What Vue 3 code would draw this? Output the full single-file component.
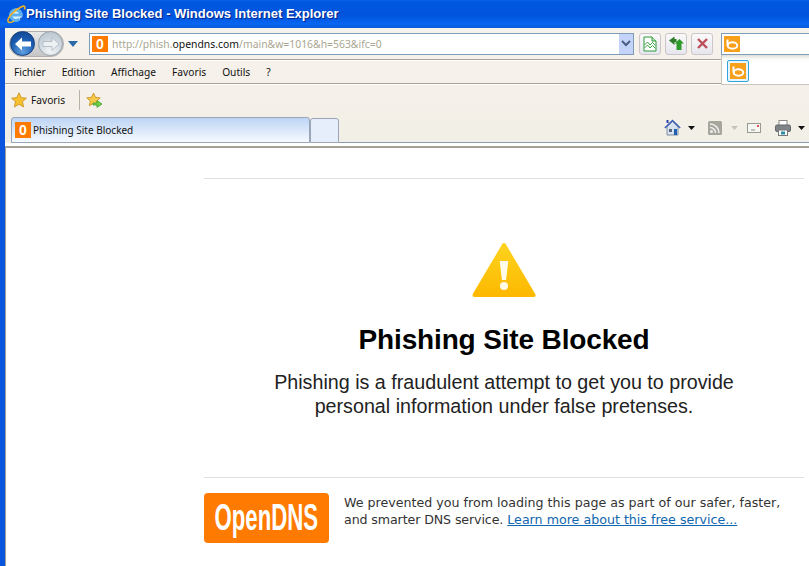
<template>
  <div class="window">
    <div class="titlebar">
      <svg class="ie-logo" width="20" height="20" viewBox="0 0 20 20">
        <circle cx="10" cy="11" r="6.500" fill="#dff1fc" />
        <path d="M5.500 11h9.500a5.200 5.200 0 1 0-1.600 4" fill="none" stroke="#5ab0ec" stroke-width="3" />
        <path d="M14 15l2.500-.8" stroke="#1d64c8" stroke-width="2" />
        <path d="M2 17.500C1 14 8 6 16 2.500c2.500-1 3.500 0 2.500 3" fill="none" stroke="#f5b21f" stroke-width="1.600" />
        <path d="M2 17.500c1 1.500 3.500 1 6-.3" fill="none" stroke="#f5b21f" stroke-width="1.400" />
      </svg>
      <span>Phishing Site Blocked - Windows Internet Explorer</span>
    </div>

    <div class="body">
      <div class="chrome">
        <div class="navrow">
          <div class="navpill">
            <div class="round back">
              <svg width="18" height="16" viewBox="0 0 18 16"><path d="M1 8l7-6.500v4h9v5H8v4z" fill="#fff" /></svg>
            </div>
            <div class="round fwd">
              <svg width="18" height="16" viewBox="0 0 18 16"><path d="M17 8l-7-6.500v4H1v5h9v4z" fill="#eef1f4" stroke="#a5adb5" stroke-width=".7" /></svg>
            </div>
          </div>
          <svg class="navcaret" width="10" height="6" viewBox="0 0 10 6"><path d="M0 0h10L5 6z" fill="#2b6aa8" /></svg>

          <div class="address">
            <div class="favicon">0</div>
            <div class="url"><span class="dim">http://phish.</span>opendns.com<span class="dim">/main&amp;w=1016&amp;h=563&amp;ifc=0</span></div>
            <div class="dropbtn">
              <svg width="10" height="7" viewBox="0 0 10 7"><path d="M1 1l4 4 4-4" fill="none" stroke="#4a5f86" stroke-width="2" /></svg>
            </div>
          </div>

          <div class="toolbtn first">
            <svg width="14" height="16" viewBox="0 0 14 16">
              <path d="M1 1h8l4 4v10H1z" fill="#fff" stroke="#2f9a3c" />
              <path d="M9 1v4h4" fill="#bfe6b5" stroke="#2f9a3c" />
              <path d="M1.500 9l3-3 2.500 3 2.500-2.500 3 3M1.500 12l3-3 2.500 3 2.500-2.500 3 3" fill="none" stroke="#3fa64a" />
            </svg>
          </div>
          <div class="toolbtn">
            <svg width="16" height="15" viewBox="0 0 16 15">
              <path d="M1 4.500L6.500.5V3h2v3h-2v3z" fill="#2f7d2a" />
              <path d="M8.500 14V7.500H6.500L11.500 3l4.500 4.500h-2.500V14z" fill="#2f9a2c" />
            </svg>
          </div>
          <div class="toolbtn">
            <svg width="13" height="13" viewBox="0 0 13 13"><path d="M2 2l9 9M11 2l-9 9" stroke="#bc4f57" stroke-width="2.400" /></svg>
          </div>

          <div class="search">
            <svg width="16" height="16" viewBox="0 0 16 16">
              <rect width="16" height="16" fill="#f9a01b" />
              <ellipse cx="8.500" cy="9.500" rx="4.800" ry="3.200" fill="none" stroke="#fff" stroke-width="2" />
              <path d="M3.500 3.500v6" stroke="#fff" stroke-width="2" />
            </svg>
          </div>
        </div>

        <div class="menubar">
          <span>Fichier</span>
          <span>Edition</span>
          <span>Affichage</span>
          <span>Favoris</span>
          <span>Outils</span>
          <span>?</span>
        </div>

        <div class="favbar">
          <svg class="star" width="16" height="16" viewBox="0 0 16 16"><path d="M8 .8l2.200 4.800 5.200.6-3.900 3.500 1.100 5.200L8 12.300l-4.600 2.600 1.100-5.200L.6 6.200l5.200-.6z" fill="#f6c02f" stroke="#c58b1c" stroke-width=".8" /></svg>
          <span class="favlabel">Favoris</span>
          <div class="favsep"></div>
          <svg class="addfav" width="17" height="17" viewBox="0 0 17 17">
            <path d="M7.500 1l2 4.300 4.700.6-3.500 3.200 1 4.700-4.200-2.400-4.200 2.400 1-4.700L.8 5.900l4.700-.6z" fill="#f6c94a" stroke="#c58b1c" stroke-width=".8" />
            <path d="M7 11h4V8.500l5 3.500-5 3.500V13H7z" fill="#6fd04a" stroke="#3b9a2a" stroke-width=".7" />
          </svg>
        </div>

        <div class="tabrow">
          <div class="tab">
            <div class="favicon small">0</div>
            <span>Phishing Site Blocked</span>
          </div>
          <div class="newtab"></div>
          <div class="tools">
            <svg class="home" width="17" height="17" viewBox="0 0 17 17">
              <path d="M3 8v8h11V8L8.500 2.500z" fill="#d8e2ee" stroke="#6a7a90" stroke-width=".8" />
              <path d="M.8 9l7.700-7.500L16.200 9" fill="none" stroke="#3a5fb5" stroke-width="1.400" />
              <rect x="2.500" y="1" width="2" height="3" fill="#2a3fa5" />
              <rect x="10" y="10" width="3" height="6" fill="#1d5fb0" />
              <rect x="5" y="10" width="3" height="3" fill="#57697f" />
            </svg>
            <svg class="caret" width="7" height="4" viewBox="0 0 7 4"><path d="M0 0h7L3.500 4z" fill="#111" /></svg>
            <svg class="rss" width="14" height="14" viewBox="0 0 14 14">
              <rect width="14" height="14" rx="1.500" fill="#a6a69c" />
              <circle cx="3.500" cy="10.500" r="1.500" fill="#eee" />
              <path d="M2 6.500a5.500 5.500 0 0 1 5.500 5.500M2 3a9 9 0 0 1 9 9" fill="none" stroke="#eee" stroke-width="1.500" />
            </svg>
            <svg class="caret faint" width="7" height="4" viewBox="0 0 7 4"><path d="M0 0h7L3.500 4z" fill="#c5c5ba" /></svg>
            <svg class="mail" width="14" height="10" viewBox="0 0 14 10">
              <rect x=".5" y=".5" width="13" height="9" fill="#f6f6f2" stroke="#9a9a94" />
              <rect x="10" y="2" width="2" height="2" fill="#e0524d" />
              <path d="M4 7h4" stroke="#888" />
            </svg>
            <svg class="printer" width="16" height="16" viewBox="0 0 16 16">
              <rect x="4" y=".5" width="8" height="5" fill="#fff" stroke="#8a8a8a" />
              <rect x=".5" y="5" width="15" height="6.500" rx="1.500" fill="#7f8488" stroke="#62666a" />
              <rect x="3.500" y="10" width="9" height="5.500" fill="#fff" stroke="#77787a" />
              <rect x="6" y="11.500" width="4" height="3" fill="#2c8fa5" />
            </svg>
            <svg class="caret" width="7" height="4" viewBox="0 0 7 4"><path d="M0 0h7L3.500 4z" fill="#111" /></svg>
          </div>
        </div>
      </div>

      <div class="page">
        <div class="panel">
          <div class="warn-wrap">
            <svg width="66" height="60" viewBox="0 0 66 60">
              <defs>
                <linearGradient id="warn" x1="0" y1="0" x2="0" y2="1">
                  <stop offset="0" stop-color="#ffd21e" />
                  <stop offset="1" stop-color="#fcb900" />
                </linearGradient>
              </defs>
              <path d="M33 6L62.500 56H3.500z" fill="url(#warn)" stroke="url(#warn)" stroke-width="4" stroke-linejoin="round" />
              <path d="M28.700 22h8.600l-2.200 19h-4.200z" fill="#fffbe8" />
              <circle cx="33" cy="47" r="4" fill="#fffbe8" />
            </svg>
          </div>
          <h1>Phishing Site Blocked</h1>
          <p class="lead">Phishing is a fraudulent attempt to get you to provide<br />personal information under false pretenses.</p>
          <div class="footer">
            <div class="logo"><span>OpenDNS</span></div>
            <p class="note">We prevented you from loading this page as part of our safer, faster,<br /><span class="tight">and smarter DNS service.</span> <a href="#">Learn more about this free service...</a></p>
          </div>
        </div>
      </div>
    </div>

    <div class="searchdrop">
      <div class="bingbtn">
        <svg width="16" height="16" viewBox="0 0 16 16">
          <rect width="16" height="16" fill="#f9a01b" />
          <ellipse cx="8.500" cy="9.500" rx="4.800" ry="3.200" fill="none" stroke="#fff" stroke-width="2" />
          <path d="M3.500 3.500v6" stroke="#fff" stroke-width="2" />
        </svg>
      </div>
    </div>
  </div>
</template>

<script setup>
</script>

<style>
html, body {
  margin: 0;
  overflow: hidden;
}
</style>

<style scoped>
.window {
  position: relative;
  width: 809px;
  height: 566px;
  overflow: hidden;
  background: #fff;
  font-family: "Noto Sans", "Liberation Sans", sans-serif;
}

.titlebar {
  height: 28px;
  box-sizing: border-box;
  display: flex;
  align-items: center;
  padding: 0 0 1px 6px;
  background: linear-gradient(#0a5fe6 0, #0058e0 8%, #0054dd 55%, #0766f2 85%, #0a5cd8 100%);
  color: #fff;
  font-family: "Liberation Sans", sans-serif;
  font-size: 13px;
  font-weight: 700;
  text-shadow: 1px 1px 1px #00208a;
  white-space: nowrap;
}

.body {
  height: 538px;
  box-sizing: border-box;
  border-left: 5px solid #0a55dd;
  display: flex;
  flex-direction: column;
}

.chrome {
  height: 120px;
  flex: none;
  background: linear-gradient(#f6f2ec 0, #f5f0e9 60%, #f0efe5 100%);
  color: #111;
  font-size: 10.2px;
}

.navrow {
  height: 32px;
  box-sizing: border-box;
  display: flex;
  align-items: center;
  border-bottom: 1px solid #a8a597;
}

.navpill {
  margin-left: 4px;
  width: 55px;
  height: 26px;
  border-radius: 13px;
  background: linear-gradient(#e8e8e8, #c5c5c5);
  border: 1px solid #b0b0b0;
  box-sizing: border-box;
  display: flex;
  align-items: center;
  justify-content: space-between;
}

.round {
  width: 25px;
  height: 25px;
  border-radius: 50%;
  box-sizing: border-box;
  display: flex;
  align-items: center;
  justify-content: center;
}

.back {
  background: radial-gradient(circle at 50% 85%, #5fa0e0, #1c5cb0 55%, #0e3f8c);
  border: 1px solid #123f80;
}

.fwd {
  background: radial-gradient(circle at 50% 85%, #f2f5f7, #c9d3dc 60%, #b6c0ca);
  border: 1px solid #9aa4ad;
}

.navcaret {
  margin-left: 4px;
}

.address {
  margin-left: 11px;
  width: 545px;
  height: 22px;
  box-sizing: border-box;
  border: 1px solid #7f9db9;
  background: #fff;
  display: flex;
  align-items: center;
  padding-left: 2px;
}

.favicon {
  width: 16px;
  height: 16px;
  background: #ff7a00;
  color: #fff;
  font-family: "Liberation Sans", sans-serif;
  font-size: 14px;
  font-weight: 700;
  line-height: 16px;
  text-align: center;
}

.url {
  margin-left: 4px;
  flex: 1;
  font-family: "Noto Sans", sans-serif;
  font-size: 10.4px;
  color: #111;
  white-space: nowrap;
}

.dim {
  color: #a9a692;
}

.dropbtn {
  width: 14px;
  height: 20px;
  background: #c3d3f9;
  display: flex;
  align-items: center;
  justify-content: center;
}

.toolbtn {
  width: 22px;
  height: 22px;
  margin-left: 4px;
  box-sizing: border-box;
  border: 1px solid #cbc6ca;
  border-radius: 3px;
  background: linear-gradient(#fbf9f8, #e6e6ef);
  display: flex;
  align-items: center;
  justify-content: center;
}

.toolbtn.first {
  margin-left: 5px;
}

.search {
  margin-left: 8px;
  flex: 1;
  height: 22px;
  box-sizing: border-box;
  border: 1px solid #7f9db9;
  border-right: 0;
  background: #fff;
  display: flex;
  align-items: center;
  padding-left: 2px;
}

.menubar {
  height: 24px;
  box-sizing: border-box;
  display: flex;
  align-items: center;
  gap: 16px;
  padding: 0 0 1px 9px;
  border-top: 1px solid #fff;
  border-bottom: 1px solid #a8a597;
}

.favbar {
  height: 33px;
  box-sizing: border-box;
  display: flex;
  align-items: center;
  border-top: 1px solid #fff;
  padding-bottom: 2px;
}

.star {
  margin-left: 6px;
}

.favlabel {
  margin-left: 4px;
}

.favsep {
  width: 1px;
  height: 20px;
  margin-left: 14px;
  background: #b5b2a6;
}

.addfav {
  margin-left: 6px;
}

.tabrow {
  height: 31px;
  box-sizing: border-box;
  display: flex;
  align-items: flex-end;
  border-bottom: 2px solid #a5a094;
  padding-bottom: 3px;
  box-shadow: inset 0 -3px 0 #fff;
  position: relative;
}

.tab {
  margin-left: 6px;
  width: 299px;
  height: 26px;
  box-sizing: border-box;
  border: 1px solid #9aa5b8;
  border-radius: 3px 3px 0 0;
  background: linear-gradient(#bcd4f4, #f7faff);
  display: flex;
  align-items: center;
  padding-left: 3px;
  gap: 2px;
}

.favicon.small {
  font-size: 14px;
}

.tab span {
  font-size: 10px;
}

.newtab {
  width: 29px;
  height: 25px;
  box-sizing: border-box;
  border: 1px solid #9aa5b8;
  border-radius: 3px 3px 0 0;
  background: #e6eefb;
}

.tools {
  flex: 1;
  height: 26px;
  box-sizing: border-box;
  border-bottom: 1px solid #8d9bb0;
  display: flex;
  align-items: center;
  padding-left: 325px;
  padding-bottom: 4px;
}

.home {
  flex: none;
}

.caret {
  flex: none;
  margin-left: 7px;
}

.rss {
  flex: none;
  margin-left: 13px;
}

.caret.faint {
  margin-left: 9px;
}

.mail {
  flex: none;
  margin-left: 9px;
}

.printer {
  flex: none;
  margin-left: 14px;
}

.page {
  flex: 1;
  min-height: 0;
  border-left: 1px solid #a5a094;
  padding-left: 198px;
}

.panel {
  width: 600px;
  height: 418px;
  box-sizing: border-box;
  padding-top: 30px;
  text-align: center;
}

.warn-wrap {
  border-top: 1px solid #e0e0e0;
  padding-top: 60px;
  height: 61px;
  line-height: 0;
  box-sizing: content-box;
}

h1 {
  margin: 22px 0 0;
  font-family: "Liberation Sans", Arial, sans-serif;
  font-size: 28px;
  letter-spacing: -0.15px;
  line-height: 36px;
  font-weight: 700;
  color: #000;
}

.lead {
  margin: 12px 0 0;
  font-family: "Liberation Sans", Arial, sans-serif;
  font-size: 19.7px;
  line-height: 24px;
  color: #222;
}

.footer {
  margin-top: 59px;
  border-top: 1px solid #e0e0e0;
  padding-top: 15px;
  display: flex;
  text-align: left;
}

.logo {
  width: 125px;
  height: 50px;
  flex: none;
  border-radius: 4px;
  background: #ff7a00;
  color: #fff;
  font-family: "Liberation Sans", sans-serif;
  font-size: 37px;
  font-weight: 700;
  line-height: 50px;
  display: flex;
  justify-content: center;
  overflow: hidden;
}

.logo span {
  flex: none;
  transform: scaleX(0.6);
}

.note {
  margin: 0 0 0 15px;
  font-family: "DejaVu Sans", sans-serif;
  font-size: 12.65px;
  line-height: 17px;
  color: #333;
  white-space: nowrap;
  padding-top: 1px;
}

.tight {
  letter-spacing: -0.12px;
}

.note a {
  color: #0f66b0;
}

.searchdrop {
  position: absolute;
  left: 721px;
  top: 55px;
  width: 88px;
  height: 30px;
  box-sizing: border-box;
  border-left: 1px solid #c9c7bd;
  border-bottom: 1px solid #c9c7bd;
  background: linear-gradient(#dededa 0, #fafaf8 4px, #fff 8px);
  padding: 5px 0 0 5px;
}

.bingbtn {
  width: 22px;
  height: 22px;
  box-sizing: border-box;
  border: 1px solid #33a4dd;
  border-radius: 2px;
  background: #e7f5fc;
  display: flex;
  align-items: center;
  justify-content: center;
}
</style>
